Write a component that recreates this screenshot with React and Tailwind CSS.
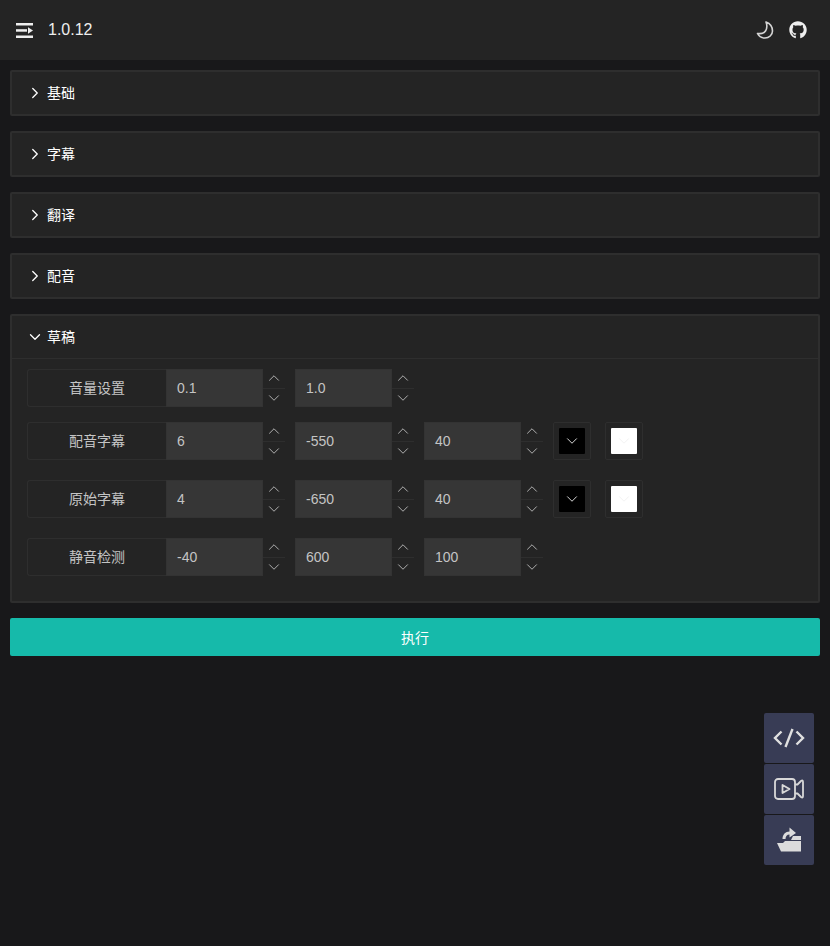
import { ChevronRight, ChevronDown, ChevronUp } from 'lucide-react';
import { FaGithub } from 'react-icons/fa';

const font = "font-['Liberation_Sans','Noto_Sans_CJK_SC',sans-serif]";

function Collapsed({ title }) {
    return (
        <div className="h-[46px] mb-[15px] flex items-center pl-[14px] bg-[#242424] border-2 border-[#2e2e2e] rounded-[2px] text-sm text-white">
            <ChevronRight className="w-[18px] h-[18px] mr-[3px] text-white" strokeWidth={1.75} />
            <span>{title}</span>
        </div>
    );
}

function NumberInput({ value }) {
    return (
        <div className="flex h-[38px] shrink-0">
            <div className="w-[97px] bg-[#363636] border border-[#333333] pl-[10px] flex items-center text-sm text-[#c4c4c4]">{value}</div>
            <div className="w-[22px] flex flex-col">
                <div className="flex-1 flex items-center justify-center border-b border-[#2e2e2e] text-[#b8b8b8]">
                    <ChevronUp className="w-[18px] h-[18px]" strokeWidth={1.25} />
                </div>
                <div className="flex-1 flex items-center justify-center text-[#b8b8b8]">
                    <ChevronDown className="w-[18px] h-[18px]" strokeWidth={1.25} />
                </div>
            </div>
        </div>
    );
}

function Swatch({ color }) {
    return (
        <div className="w-[38px] h-[38px] shrink-0 flex items-center justify-center border border-[#2e2e2e] rounded-[2px]">
            <div className={color === 'black' ? 'w-[26px] h-[26px] bg-black flex items-center justify-center text-[#e5e5e5] rounded-[1px]' : 'w-[26px] h-[26px] bg-white flex items-center justify-center text-[#f0f0f0] rounded-[1px]'}>
                <ChevronDown className="w-[18px] h-[18px]" strokeWidth={1.25} />
            </div>
        </div>
    );
}

function Row({ label, values, swatches, className }) {
    return (
        <div className={`flex items-center ${className}`}>
            <div className="w-[139px] h-[38px] shrink-0 flex items-center justify-center border border-[#2e2e2e] border-r-0 rounded-l-[3px] text-sm text-[#c4c4c4]">{label}</div>
            <div className="flex gap-[10px]">
                {values.map((v, i) => (
                    <NumberInput key={i} value={v} />
                ))}
            </div>
            {swatches && (
                <div className="flex gap-[14px] ml-[10px]">
                    <Swatch color="black" />
                    <Swatch color="white" />
                </div>
            )}
        </div>
    );
}

export default function App() {
    return (
        <div className={`${font} min-h-[946px] bg-[#18181a] relative`}>
            {/* Header */}
            <header className="h-[60px] bg-[#242424] flex items-center pl-[16px] pr-[23px]">
                <svg width="17" height="15" viewBox="0 0 17 15" className="text-[#eeeeee] mr-[15px]" fill="currentColor">
                    <rect x="0" y="0" width="17" height="2.5" />
                    <rect x="0" y="6.2" width="11" height="2.5" />
                    <path d="M12 4.2 L17 7.5 L12 10.8 Z" />
                    <rect x="0" y="12.5" width="17" height="2.5" />
                </svg>
                <span className="text-base text-[#eeeeee]">1.0.12</span>
                <div className="ml-auto flex items-center gap-[15px]">
                    <svg width="18" height="18" viewBox="0 0 18 18" fill="none" stroke="#d4d4d4" strokeWidth="1.6" strokeLinejoin="round">
                        <path d="M10 1 C14 2.5 16.5 6 16.5 10 C16.5 14 13 17 9 17 C6 17 3 15.5 1.5 12.5 C5 13 8 12.5 9.5 10 C11 7.5 11.2 4 10 1 Z" />
                    </svg>
                    <FaGithub className="w-[18px] h-[18px] text-[#eeeeee]" />
                </div>
            </header>

            {/* Panels */}
            <main className="px-[10px] pt-[10px]">
                <Collapsed title="基础" />
                <Collapsed title="字幕" />
                <Collapsed title="翻译" />
                <Collapsed title="配音" />

                <div className="bg-[#242424] border-2 border-[#2e2e2e] rounded-[2px]">
                    <div className="h-[43px] flex items-center pl-[14px] border-b border-[#2e2e2e] text-sm text-white">
                        <ChevronDown className="w-[18px] h-[18px] mr-[3px]" strokeWidth={1.75} />
                        <span>草稿</span>
                    </div>
                    <div className="pl-[15px] pt-[10px] pb-[25px]">
                        <Row label="音量设置" values={['0.1', '1.0']} className="mb-[15px]" />
                        <Row label="配音字幕" values={['6', '-550', '40']} swatches className="mb-[20px]" />
                        <Row label="原始字幕" values={['4', '-650', '40']} swatches className="mb-[20px]" />
                        <Row label="静音检测" values={['-40', '600', '100']} />
                    </div>
                </div>

                <button className="w-full h-[38px] mt-[15px] pt-px bg-[#16baaa] rounded-[2px] text-sm text-white">执行</button>
            </main>

            {/* Floating buttons */}
            <div className="absolute left-[764px] top-[713px] flex flex-col gap-px">
                <div className="w-[50px] h-[50px] bg-[#383c55] rounded-[2px] flex items-center justify-center">
                    <svg width="32" height="20" viewBox="0 0 32 20" fill="none" stroke="#e0e0e0" strokeWidth="2.4">
                        <path d="M8.5 3.5 L2 10 L8.5 16.5" />
                        <path d="M23.5 3.5 L30 10 L23.5 16.5" />
                        <path d="M19.5 1 L12.5 19" />
                    </svg>
                </div>
                <div className="w-[50px] h-[50px] bg-[#383c55] rounded-[2px] flex items-center justify-center">
                    <svg width="30" height="22" viewBox="0 0 30 22" fill="none" stroke="#d8d8d8" strokeWidth="1.8" strokeLinejoin="round">
                        <rect x="1" y="1" width="20" height="20" rx="3" />
                        <path d="M21 6.5 H23.5 L27 3 Q29 1.5 29 4 V18 Q29 20.5 27 19 L23.5 15.5 H21" />
                        <path d="M8.5 7 L15.5 11 L8.5 15 Z" />
                    </svg>
                </div>
                <div className="w-[50px] h-[50px] bg-[#383c55] rounded-[2px] flex items-center justify-center">
                    <svg width="26" height="26" viewBox="0 0 26 26" fill="#dcdcdc">
                        <path d="M1 16 H7 L9 14 H25 V24.5 H5 Z" />
                        <path d="M17 9 H25 V13 H15 Z" />
                        <path d="M6.5 12 C6.5 7.5 9.5 4.5 13.5 4.5 V0.5 L20 6 L13.5 10.5 V7.5 C11 7.5 9.5 9.5 9.5 12 Z" />
                    </svg>
                </div>
            </div>
        </div>
    );
}
